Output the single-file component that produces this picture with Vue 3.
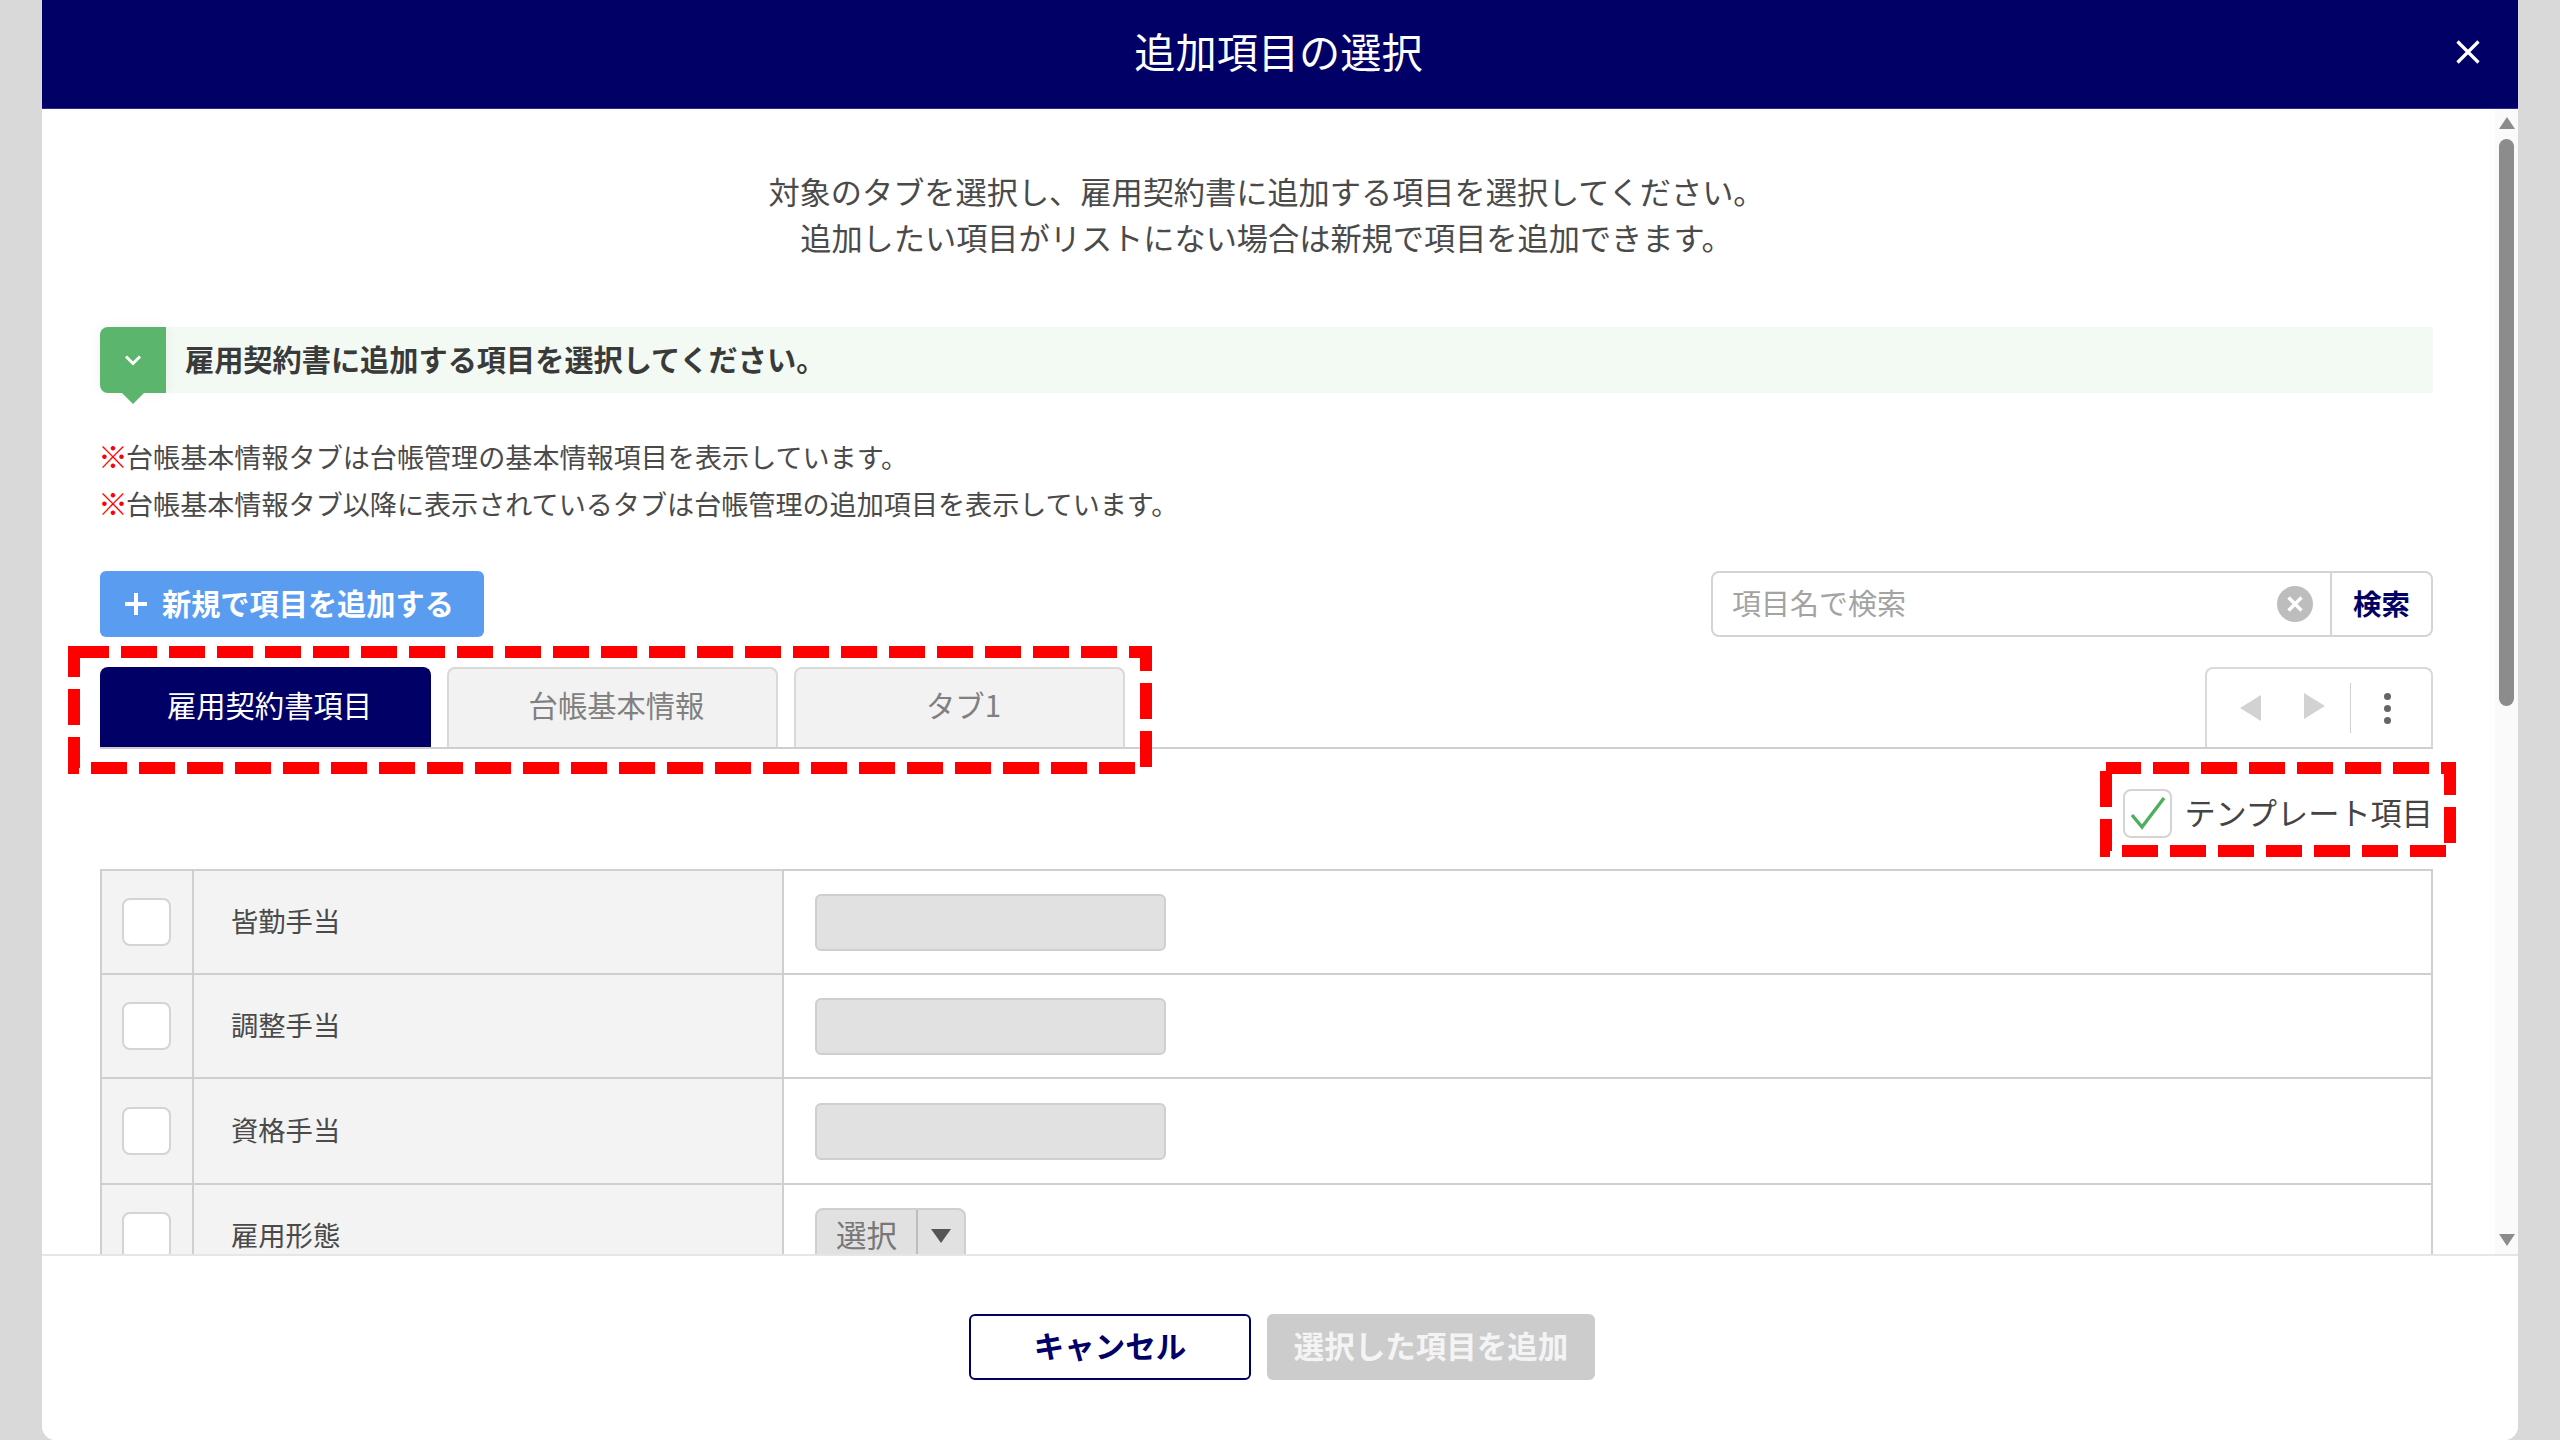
<script setup>
const intro = [
  '対象のタブを選択し、雇用契約書に追加する項目を選択してください。',
  '追加したい項目がリストにない場合は新規で項目を追加できます。'
]
const notes = [
  '台帳基本情報タブは台帳管理の基本情報項目を表示しています。',
  '台帳基本情報タブ以降に表示されているタブは台帳管理の追加項目を表示しています。'
]
const tabs = ['雇用契約書項目', '台帳基本情報', 'タブ1']
const rows = [
  { label: '皆勤手当', type: 'input' },
  { label: '調整手当', type: 'input' },
  { label: '資格手当', type: 'input' },
  { label: '雇用形態', type: 'select' }
]
</script>

<template>
  <div class="page">
    <div class="modal">
      <header class="head">
        <h1 class="title">追加項目の選択</h1>
        <svg class="close" width="24" height="24" viewBox="0 0 24 24">
          <path d="M1.5 1.5 22.5 22.5M22.5 1.5 1.5 22.5" stroke="#fff" stroke-width="3.2" fill="none" />
        </svg>
      </header>

      <main class="body">
        <div class="content">
          <div class="intro">
            <p v-for="line in intro" :key="line">{{ line }}</p>
          </div>

          <div class="lead">
            <div class="lead-tag">
              <svg width="18" height="12" viewBox="0 0 18 12">
                <path d="M2 2.5 9 9.5 16 2.5" stroke="#fff" stroke-width="3" fill="none" />
              </svg>
            </div>
            <span class="lead-text">雇用契約書に追加する項目を選択してください。</span>
          </div>

          <div class="notes">
            <p v-for="note in notes" :key="note"><span class="mark">※</span>{{ note }}</p>
          </div>

          <div class="tools">
            <button class="add">
              <svg width="24" height="24" viewBox="0 0 24 24">
                <path d="M12 1V23M1 12H23" stroke="#fff" stroke-width="4" fill="none" />
              </svg>
              <span class="add-text">新規で項目を追加する</span>
            </button>
            <div class="search">
              <span class="placeholder">項目名で検索</span>
              <svg class="clear" width="36" height="36" viewBox="0 0 36 36">
                <circle cx="18" cy="18" r="18" fill="#bdbdbd" />
                <path d="M11.5 11.5 24.5 24.5M24.5 11.5 11.5 24.5" stroke="#fff" stroke-width="3.4" fill="none" />
              </svg>
              <span class="search-btn">検索</span>
            </div>
          </div>

          <div class="tabbar">
            <div v-for="(tab, i) in tabs" :key="tab" class="tab" :class="{ active: i === 0 }">{{ tab }}</div>
            <div class="pager">
              <svg width="22" height="28" viewBox="0 0 22 28"><path d="M22 1V27L1 14Z" fill="#d2d2d2" /></svg>
              <svg class="next" width="22" height="28" viewBox="0 0 22 28"><path d="M0 1V27L21 14Z" fill="#d2d2d2" /></svg>
              <i class="pager-line"></i>
              <div class="dots"><b></b><b></b><b></b></div>
            </div>
          </div>

          <div class="tpl">
            <span class="tpl-box">
              <svg width="38" height="36" viewBox="0 0 38 36">
                <path d="M3 20 13 32 35 3" stroke="#4cb05f" stroke-width="3.4" fill="none" />
              </svg>
            </span>
            <span class="tpl-text">テンプレート項目</span>
          </div>

          <div class="table">
            <div v-for="row in rows" :key="row.label" class="row">
              <div class="cell-check"><span class="check"></span></div>
              <div class="cell-label"><span class="label-text">{{ row.label }}</span></div>
              <div class="cell-value">
                <span v-if="row.type === 'input'" class="field"></span>
                <span v-else class="select">
                  <span class="select-text">選択</span>
                  <span class="select-caret">
                    <svg width="20" height="14" viewBox="0 0 20 14"><path d="M0 0H20L10 14Z" fill="#555" /></svg>
                  </span>
                </span>
              </div>
            </div>
          </div>
        </div>

        <div class="scrollbar">
          <svg width="16" height="12" viewBox="0 0 16 12"><path d="M8 0 16 12H0Z" fill="#8c8c8c" /></svg>
          <i class="thumb"></i>
          <svg class="down" width="16" height="12" viewBox="0 0 16 12"><path d="M0 0H16L8 12Z" fill="#8c8c8c" /></svg>
        </div>
      </main>

      <footer class="foot">
        <button class="cancel">キャンセル</button>
        <button class="submit">選択した項目を追加</button>
      </footer>
    </div>

    <svg class="marks" width="2560" height="1440" viewBox="0 0 2560 1440">
      <rect x="74" y="652" width="1072" height="116" />
      <rect x="2106" y="768" width="344" height="83" />
    </svg>
  </div>
</template>

<style>
html, body { margin: 0; background: #d9d9d9; }
</style>

<style scoped>
.page {
  position: relative;
  width: 2560px;
  height: 1440px;
  overflow: hidden;
  background: #d9d9d9;
  font-family: "Noto Sans CJK JP", "Noto Sans", sans-serif;
  color: #444;
}
.modal {
  width: 2476px;
  height: 1440px;
  margin: 0 42px;
  display: flex;
  flex-direction: column;
  background: #fff;
  border-radius: 0 0 14px 14px;
  overflow: hidden;
}
.head {
  height: 109px;
  flex: none;
  box-sizing: border-box;
  position: relative;
  display: flex;
  align-items: center;
  justify-content: center;
  padding-bottom: 6px;
  padding-right: 3px;
  background: #000066;
  border-bottom: 1px solid #2c2c8c;
}
.title {
  margin: 0;
  color: #fff;
  font-size: 41.2px;
  font-weight: 400;
  line-height: 1;
}
.close { position: absolute; right: 38px; top: 40px; }

.body {
  flex: 1;
  min-height: 0;
  position: relative;
  overflow: hidden;
}
.content { padding: 59px 85px 0 58px; }
p { margin: 0; }
.intro {
  text-align: center;
  font-size: 31.2px;
  line-height: 46px;
  color: #4a4a4a;
}
.lead {
  margin-top: 67px;
  height: 66px;
  display: flex;
  align-items: center;
  background: #f3faf4;
  border-radius: 8px 0 0 8px;
}
.lead-tag {
  position: relative;
  width: 66px;
  height: 66px;
  flex: none;
  display: flex;
  align-items: center;
  justify-content: center;
  background: #5cb56c;
  border-radius: 8px 0 0 8px;
  box-shadow: 0 0 14px rgba(0, 0, 0, 0.06);
}
.lead-tag::after {
  content: "";
  position: absolute;
  left: 22px;
  top: 66px;
  border-style: solid;
  border-width: 11px 11px 0;
  border-color: #5cb56c transparent transparent;
}
.lead-text {
  margin-left: 19px;
  padding-bottom: 4px;
  font-size: 29.2px;
  line-height: 40px;
  font-weight: 700;
  color: #3a3a3a;
}
.notes {
  margin-top: 41px;
  font-size: 27.1px;
  line-height: 46.5px;
  color: #4a4a4a;
}
.mark {
  display: inline-block;
  width: 28px;
  margin-left: -2px;
  color: #f00;
  font-weight: 700;
  font-size: 30px;
  line-height: 1;
}
.tools {
  margin-top: 44px;
  display: flex;
  justify-content: space-between;
}
button {
  font-family: inherit;
  padding: 0;
  cursor: pointer;
}
.add {
  width: 384px;
  height: 66px;
  display: flex;
  align-items: center;
  gap: 14px;
  padding-left: 24px;
  border: 0;
  border-radius: 6px;
  background: #5a9cf0;
  color: #fff;
  font-size: 29.2px;
  font-weight: 700;
}
.add-text { padding-bottom: 4px; line-height: 40px; }
.search {
  width: 722px;
  height: 66px;
  box-sizing: border-box;
  display: flex;
  align-items: center;
  border: 2px solid #d4d4d4;
  border-radius: 8px;
}
.placeholder {
  margin-left: 19px;
  padding-bottom: 4px;
  font-size: 29px;
  line-height: 40px;
  color: #a3a3a3;
}
.clear { margin-left: auto; margin-right: 17px; }
.search-btn {
  width: 101px;
  align-self: stretch;
  display: flex;
  align-items: center;
  justify-content: center;
  padding-bottom: 3px;
  box-sizing: border-box;
  border-left: 2px solid #d4d4d4;
  color: #000066;
  font-size: 28.5px;
  font-weight: 700;
}
.tabbar {
  margin-top: 30px;
  height: 82px;
  box-sizing: border-box;
  display: flex;
  gap: 16px;
  border-bottom: 2px solid #cfcfcf;
}
.tab {
  width: 331px;
  box-sizing: border-box;
  display: flex;
  align-items: center;
  justify-content: center;
  padding-left: 8px;
  padding-bottom: 9px;
  background: #f2f2f2;
  border: 2px solid #d9d9d9;
  border-bottom: 0;
  border-radius: 8px 8px 0 0;
  color: #808080;
  font-size: 29.3px;
}
.tab.active {
  background: #000066;
  border-color: #000066;
  color: #fff;
}
.pager {
  margin-left: auto;
  width: 228px;
  box-sizing: border-box;
  display: flex;
  align-items: center;
  padding-left: 32px;
  border: 2px solid #d9d9d9;
  border-bottom: 0;
  border-radius: 8px 8px 0 0;
}
.next { margin-left: 43px; margin-top: -4px; }
.pager-line {
  width: 1px;
  height: 50px;
  margin-left: 24px;
  background: #d2d2d2;
}
.dots {
  margin-left: 33px;
  display: flex;
  flex-direction: column;
  gap: 5px;
}
.dots b {
  width: 7px;
  height: 7px;
  border-radius: 50%;
  background: #666;
}
.tpl {
  margin-top: 39px;
  height: 50px;
  display: flex;
  justify-content: flex-end;
  align-items: center;
  gap: 12px;
}
.tpl-box {
  width: 49px;
  height: 49px;
  box-sizing: border-box;
  display: flex;
  align-items: center;
  justify-content: center;
  border: 2px solid #d4d4d4;
  border-radius: 8px;
}
.tpl-text {
  padding-bottom: 3px;
  font-size: 31.2px;
  line-height: 44px;
  color: #444;
  white-space: nowrap;
}
.table {
  margin-top: 31px;
  border: solid #cfcfcf;
  border-width: 2px 2px 0;
}
.row {
  display: grid;
  grid-template-columns: 92px 590px 1fr;
  height: 102px;
  border-bottom: 2px solid #cfcfcf;
}
.row:nth-child(3) { height: 104px; }
.cell-check, .cell-label {
  background: #f3f3f3;
  display: flex;
  align-items: center;
  border-right: 2px solid #cfcfcf;
}
.cell-check { padding-left: 20px; }
.check {
  width: 49px;
  height: 48px;
  box-sizing: border-box;
  background: #fff;
  border: 2px solid #d4d4d4;
  border-radius: 8px;
}
.cell-label {
  padding-left: 37px;
  font-size: 27.3px;
  color: #4a4a4a;
}
.label-text { padding-bottom: 5px; line-height: 30px; }
.cell-value {
  display: flex;
  align-items: center;
  padding-left: 31px;
}
.field {
  width: 351px;
  height: 57px;
  box-sizing: border-box;
  background: #e1e1e1;
  border: 2px solid #cfcfcf;
  border-radius: 6px;
}
.select {
  width: 151px;
  height: 57px;
  box-sizing: border-box;
  display: flex;
  background: #e1e1e1;
  border: 2px solid #cfcfcf;
  border-radius: 8px;
  color: #777;
  font-size: 30.5px;
  line-height: 32px;
}
.select-text {
  width: 101px;
  display: flex;
  align-items: center;
  justify-content: center;
  padding-bottom: 4px;
  box-sizing: border-box;
  border-right: 2px solid #bdbdbd;
}
.select-caret {
  flex: 1;
  display: flex;
  align-items: center;
  justify-content: center;
}
.scrollbar {
  position: absolute;
  top: 0;
  right: 0;
  bottom: 0;
  width: 23px;
  box-sizing: border-box;
  display: flex;
  flex-direction: column;
  align-items: center;
  padding-top: 8px;
  background: #fafafa;
}
.thumb {
  width: 15px;
  height: 567px;
  margin-top: 10px;
  border-radius: 8px;
  background: #8c8c8c;
}
.down { margin-top: auto; margin-bottom: 8px; }
.foot {
  height: 186px;
  flex: none;
  box-sizing: border-box;
  display: flex;
  justify-content: center;
  gap: 16px;
  padding-top: 58px;
  padding-left: 4px;
  border-top: 2px solid #e6e6e6;
  background: #fff;
}
.cancel, .submit {
  height: 66px;
  border-radius: 6px;
  font-size: 30.5px;
  font-weight: 700;
  padding-bottom: 4px;
}
.cancel {
  width: 282px;
  background: #fff;
  border: 2px solid #000066;
  color: #000066;
}
.submit {
  width: 328px;
  background: #cccccc;
  border: 0;
  color: #f4f4f4;
}
.marks {
  position: absolute;
  inset: 0;
  pointer-events: none;
}
.marks rect {
  fill: none;
  stroke: #f00;
  stroke-width: 12;
  stroke-dasharray: 36 12;
  stroke-dashoffset: 1;
}
</style>
